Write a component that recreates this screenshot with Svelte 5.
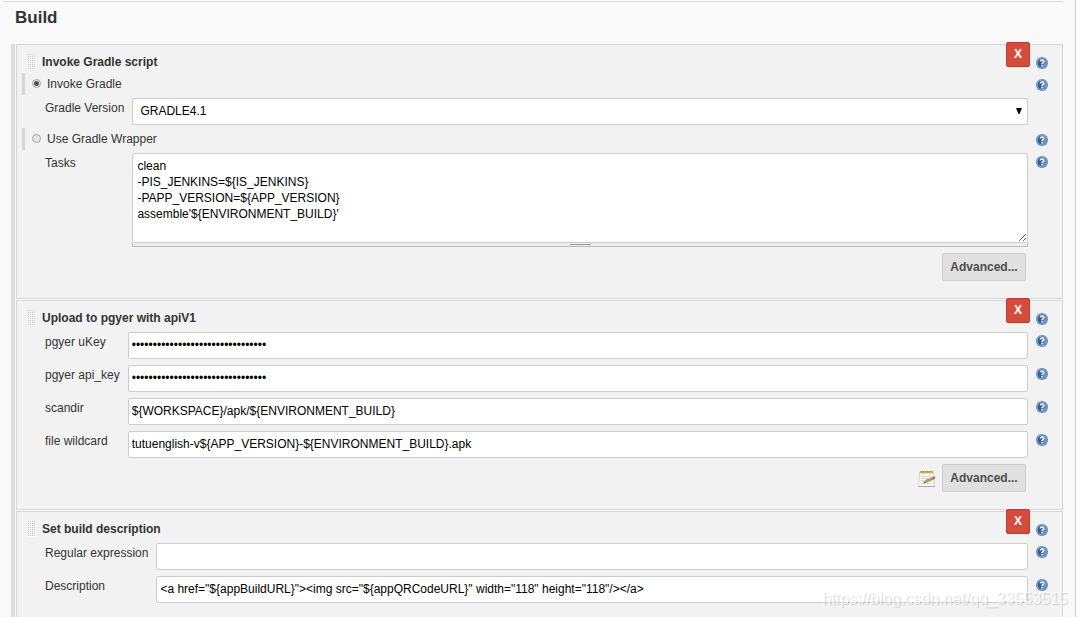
<script>
  let mode = 'gradle';
  let version = 'GRADLE4.1';
  let tasks =
    "clean\n-PIS_JENKINS=${IS_JENKINS}\n-PAPP_VERSION=${APP_VERSION}\nassemble'${ENVIRONMENT_BUILD}'";

  const secret = 'x'.repeat(32);

  const pgyer = [
    { id: 'ukey', label: 'pgyer uKey', type: 'password', value: secret },
    { id: 'api-key', label: 'pgyer api_key', type: 'password', value: secret },
    { id: 'scandir', label: 'scandir', type: 'text', value: '${WORKSPACE}/apk/${ENVIRONMENT_BUILD}' },
    {
      id: 'wildcard',
      label: 'file wildcard',
      type: 'text',
      value: 'tutuenglish-v${APP_VERSION}-${ENVIRONMENT_BUILD}.apk',
    },
  ];

  const description = [
    { id: 'regexp', label: 'Regular expression', type: 'text', value: '' },
    {
      id: 'description',
      label: 'Description',
      type: 'text',
      value: '<a href="${appBuildURL}"><img src="${appQRCodeURL}" width="118" height="118"/></a>',
    },
  ];
</script>

{#snippet help(name)}
  <button class="help" type="button" aria-label="Help for {name}">
    <svg width="12" height="12" viewBox="0 0 12 12">
      <circle cx="6" cy="6" r="6" fill="#5580b5" />
      <circle cx="6" cy="6" r="4.9" fill="#2f5f9f" stroke="#b4c8e0" stroke-width=".7" />
      <path d="M7 1.6A4.5 4.5 0 0 1 7 10.4Z" fill="#6c90c1" />
      <path
        d="M4.3 4.3C4.6 2.6 7.7 2.6 7.6 4.4C7.5 5.6 6 5.6 6 7.2"
        fill="none"
        stroke="#fff"
        stroke-width="1.5"
      />
      <rect x="5.2" y="8" width="1.6" height="1.5" fill="#fff" />
    </svg>
  </button>
{/snippet}

{#snippet heading(title)}
  <div class="heading">
    <svg class="grip" width="9" height="16" viewBox="0 0 9 16">
      <rect width="9" height="16" fill="#fafafa" />
      {#each [1, 3, 5, 7, 9, 11, 13, 15] as y}
        <path d="M1 {y - 0.5}h1m1 0h1m1 0h1m1 0h1" stroke="#c0c0c0" />
      {/each}
    </svg>
    <h3>{title}</h3>
  </div>
  {@render help(title)}
  <button class="delete" type="button" aria-label="Delete {title}">X</button>
{/snippet}

{#snippet entries(list)}
  {#each list as field}
    <label class="name" for={field.id}>{field.label}</label>
    <div class="setting">
      <input id={field.id} type={field.type} value={field.value} autocomplete="off" spellcheck="false" />
    </div>
    {@render help(field.label)}
  {/each}
{/snippet}

<main>
  <h2>Build</h2>

  <form class="steps">
    <section>
      {@render heading('Invoke Gradle script')}

      <label class="choice">
        <input type="radio" name="mode" value="gradle" bind:group={mode} />
        Invoke Gradle
      </label>
      {@render help('Invoke Gradle')}

      <label class="name" for="version">Gradle Version</label>
      <div class="setting select">
        <select id="version" bind:value={version}>
          <option>GRADLE4.1</option>
        </select>
        <svg class="arrow" width="6" height="6" viewBox="0 0 6 6"><path d="M0 0h6L3.5 6h-1z" /></svg>
      </div>
      <span></span>

      <label class="choice">
        <input type="radio" name="mode" value="wrapper" bind:group={mode} />
        Use Gradle Wrapper
      </label>
      {@render help('Use Gradle Wrapper')}

      <label class="name" for="tasks">Tasks</label>
      <div class="setting">
        <textarea id="tasks" bind:value={tasks} spellcheck="false"></textarea>
        <div class="handle"><span></span></div>
      </div>
      {@render help('Tasks')}

      <div class="actions">
        <button class="advanced" type="button">Advanced...</button>
      </div>
    </section>

    <section>
      {@render heading('Upload to pgyer with apiV1')}
      {@render entries(pgyer)}

      <div class="actions">
        <svg class="note" width="18" height="18" viewBox="0 0 18 18">
          <path d="M1.5 2h14l.8 14.5H.7z" fill="#f8f8f7" stroke="#d2d2cf" />
          <path d="M.5 16.5h16" stroke="#aaa" />
          <path d="M2 1h13v2.4H2z" fill="#c9b850" />
          <path d="M3.5 1v1.5m2-1.5v1.5m2-1.5v1.5m2-1.5v1.5m2-1.5v1.5m2-1.5v1.5" stroke="#a39340" />
          <path d="M3 6.5h10M3 8.5h7M3 10.5h4M3 13.5h10" stroke="#d3d6da" />
          <path d="M6 12.8l2-2.6 7-3 1 1.7-7 3.2z" fill="#d99b35" stroke="#8b642b" stroke-width=".6" />
          <path d="M14.3 7.4l2-1 1.2 1.4-2 1.4z" fill="#e34a3d" />
          <path d="M5.5 13.3l1.3-1.6.9.9z" fill="#333" />
        </svg>
        <button class="advanced" type="button">Advanced...</button>
      </div>
    </section>

    <section>
      {@render heading('Set build description')}
      {@render entries(description)}
    </section>
  </form>

  <div class="watermark">https://blog.csdn.net/qq_33553515</div>
</main>

<style>
  :global(body) {
    background: #f9f9f9;
  }

  main {
    box-sizing: border-box;
    display: flex;
    flex-direction: column;
    min-height: 100vh;
    margin-right: 1px;
    padding: 1px 12px 0 3px;
    border-right: 1px solid #ccc;
    color: #333;
    font: 12px/22px 'Liberation Sans', Arial, sans-serif;
  }

  h2 {
    margin: 0 0 11px;
    padding: 5px 12px;
    border-top: 1px solid #ddd;
    font-size: 17px;
    line-height: 21px;
  }

  .steps {
    flex: 1;
    display: flex;
    flex-direction: column;
    gap: 1px;
    margin-left: 8px;
    border-left: 4px solid #ddd;
    padding-left: 1px;
  }

  section {
    position: relative;
    display: grid;
    grid-template-columns: max-content 1fr 34px;
    align-content: start;
    padding: 6px 0 17px;
    border: 1px solid #d6d6d6;
    background: #f2f2f2;
  }

  section:last-child {
    flex: 1;
    border-bottom: 0;
  }

  .heading {
    grid-column: 1 / 3;
    display: flex;
    align-items: flex-start;
    gap: 6px;
    padding-left: 10px;
  }

  .grip {
    margin-top: 3px;
  }

  h3 {
    margin: 0;
    font-size: 12px;
    line-height: 22px;
  }

  .choice {
    grid-column: 1 / 3;
    display: flex;
    align-items: center;
    gap: 6px;
    margin-left: 5px;
    padding-left: 7px;
    border-left: 3px solid #d6d6d6;
  }

  .choice input {
    appearance: none;
    width: 9px;
    height: 9px;
    margin: 0 0 1px;
    border: 1px solid #a5a5a5;
    border-radius: 50%;
    background: #e4e4e4;
  }

  .choice input:checked {
    background: radial-gradient(circle, #555 0 2px, #e4e4e4 3px);
  }

  .name {
    padding: 2px 8px 0 28px;
  }

  .setting {
    padding: 3px 0;
  }

  .setting input,
  select,
  textarea {
    box-sizing: border-box;
    display: block;
    width: 100%;
    height: 27px;
    margin: 0;
    padding: 0 3px 2px;
    border: 1px solid #ccc;
    border-radius: 2px;
    background: #fff;
    color: #000;
    font: 12px/16px 'Liberation Sans', Arial, sans-serif;
  }

  .select {
    position: relative;
  }

  select {
    appearance: none;
    padding: 0 7px 2px;
    border-radius: 0;
  }

  .arrow {
    position: absolute;
    top: 13px;
    right: 6px;
    pointer-events: none;
  }

  textarea {
    height: 90px;
    padding: 4px;
    resize: both;
  }

  .handle {
    display: flex;
    justify-content: center;
    height: 3px;
    border: solid #bbb;
    border-width: 0 1px 1px;
    background: #eee;
  }

  .handle span {
    width: 21px;
    height: 1px;
    margin-top: 1px;
    background: #999;
  }

  .help {
    width: 12px;
    height: 12px;
    margin: 6px 0 0 8px;
    padding: 0;
    border: 0;
    background: none;
    cursor: pointer;
  }

  .help svg {
    display: block;
  }

  .delete {
    position: absolute;
    top: -3px;
    right: 32px;
    width: 24px;
    height: 25px;
    padding: 0 0 2px;
    border: 1px solid #c4382b;
    border-radius: 2px;
    background: #d54c3d;
    color: #fff;
    font: bold 12px/20px 'Liberation Sans', Arial, sans-serif;
    cursor: pointer;
  }

  .actions {
    grid-column: 1 / 3;
    display: flex;
    justify-content: flex-end;
    align-items: center;
    gap: 6px;
    padding: 3px 2px 0 0;
  }

  .note {
    margin-top: 2px;
  }

  .advanced {
    width: 84px;
    height: 28px;
    padding: 0;
    border: 1px solid #ccc;
    border-radius: 2px;
    background: #e0e0e0;
    color: #4d4d4d;
    font: bold 12px/22px 'Liberation Sans', Arial, sans-serif;
    cursor: pointer;
  }

  .watermark {
    position: fixed;
    right: 9px;
    bottom: 8px;
    color: rgba(255, 255, 255, 0.7);
    font-size: 16px;
    line-height: 20px;
    text-shadow: 1px 1px 1px rgba(0, 0, 0, 0.16);
    pointer-events: none;
  }
</style>
